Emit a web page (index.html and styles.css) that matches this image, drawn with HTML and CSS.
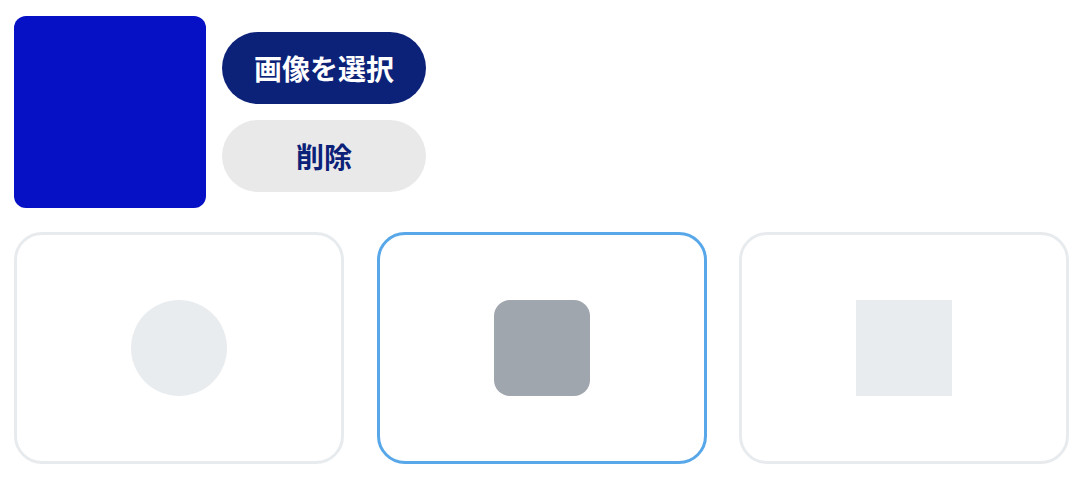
FILE: index.html
```html
<!DOCTYPE html>
<html lang="ja">
<head>
    <meta charset="UTF-8">
    <meta name="viewport" content="width=device-width, initial-scale=1.0">
    <title>アイコン設定</title>
    <link rel="stylesheet" href="styles.css">
</head>
<body>
    <div class="container">
        <!-- Image preview + actions -->
        <div class="image-row">
            <div class="preview"></div>
            <div class="actions">
                <button class="btn btn-primary">画像を選択</button>
                <button class="btn btn-secondary">削除</button>
            </div>
        </div>

        <!-- Shape options -->
        <div class="shapes">
            <div class="shape-card">
                <div class="shape shape-circle"></div>
            </div>
            <div class="shape-card selected">
                <div class="shape shape-rounded"></div>
            </div>
            <div class="shape-card">
                <div class="shape shape-square"></div>
            </div>
        </div>
    </div>
</body>
</html>
```

FILE: styles.css
```css
body {
    margin: 0;
    background-color: #ffffff;
    font-family: "Noto Sans CJK JP", "Noto Sans", sans-serif;
}

.container {
    padding: 16px 14px;
}

.image-row {
    display: flex;
    align-items: center;
    gap: 16px;
}

.preview {
    width: 192px;
    height: 192px;
    border-radius: 12px;
    background-color: #0610c4;
}

.actions {
    display: flex;
    flex-direction: column;
    gap: 16px;
}

.btn {
    width: 204px;
    height: 72px;
    border: none;
    border-radius: 36px;
    font-family: inherit;
    font-size: 28px;
    font-weight: bold;
    cursor: pointer;
}

.btn-primary {
    background-color: #0c2178;
    color: #ffffff;
}

.btn-secondary {
    background-color: #e9e9e9;
    color: #0c2178;
}

.shapes {
    display: grid;
    grid-template-columns: repeat(3, 330px);
    gap: 32.5px;
    margin-top: 24px;
}

.shape-card {
    box-sizing: border-box;
    height: 232px;
    border: 3px solid #e8ebee;
    border-radius: 28px;
    display: flex;
    align-items: center;
    justify-content: center;
    cursor: pointer;
}

.shape-card.selected {
    border-color: #58a8e9;
}

.shape {
    width: 96px;
    height: 96px;
}

.shape-circle {
    border-radius: 50%;
    background-color: #e9ecef;
}

.shape-rounded {
    border-radius: 16px;
    background-color: #a0a6ad;
}

.shape-square {
    background-color: #e9ecef;
}
```
